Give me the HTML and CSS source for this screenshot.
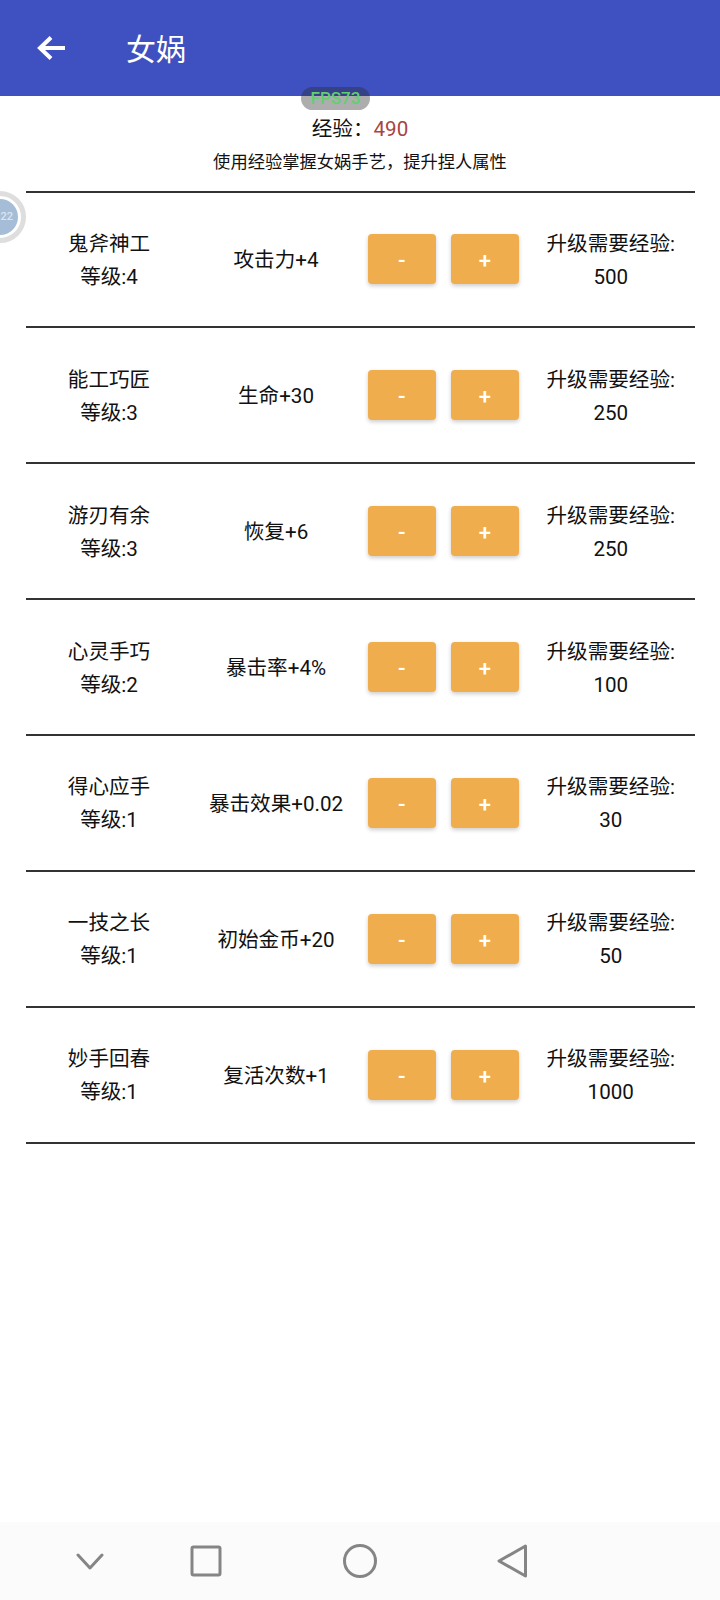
FILE: index.html
```html
<!DOCTYPE html>
<html lang="zh-CN">
<head>
    <meta charset="UTF-8">
    <meta name="viewport" content="width=device-width, initial-scale=1.0">
    <title>女娲</title>
    <link rel="stylesheet" href="styles.css">
</head>
<body>
    <div class="app">
        <header class="top-bar">
            <svg class="back-icon" width="32" height="28" viewBox="0 0 32 28">
                <path d="M29 14H4M15 3.5 4 14l11 10.5" fill="none" stroke="#fff" stroke-width="4"/>
            </svg>
            <h1 class="page-title">女娲</h1>
        </header>

        <div class="fps-badge">FPS73</div>
        <div class="float-ball"><span>22</span></div>

        <section class="summary">
            <p class="exp-total">经验：<span class="exp-value">490</span></p>
            <p class="exp-hint">使用经验掌握女娲手艺，提升捏人属性</p>
        </section>

        <div class="skill-list">
            <div class="skill-row">
                <div class="skill-cell">鬼斧神工<br>等级:4</div>
                <div class="skill-cell">攻击力+4</div>
                <div class="skill-btns"><button class="btn-step">-</button><button class="btn-step">+</button></div>
                <div class="skill-cell">升级需要经验:<br>500</div>
            </div>
            <div class="skill-row">
                <div class="skill-cell">能工巧匠<br>等级:3</div>
                <div class="skill-cell">生命+30</div>
                <div class="skill-btns"><button class="btn-step">-</button><button class="btn-step">+</button></div>
                <div class="skill-cell">升级需要经验:<br>250</div>
            </div>
            <div class="skill-row">
                <div class="skill-cell">游刃有余<br>等级:3</div>
                <div class="skill-cell">恢复+6</div>
                <div class="skill-btns"><button class="btn-step">-</button><button class="btn-step">+</button></div>
                <div class="skill-cell">升级需要经验:<br>250</div>
            </div>
            <div class="skill-row">
                <div class="skill-cell">心灵手巧<br>等级:2</div>
                <div class="skill-cell">暴击率+4%</div>
                <div class="skill-btns"><button class="btn-step">-</button><button class="btn-step">+</button></div>
                <div class="skill-cell">升级需要经验:<br>100</div>
            </div>
            <div class="skill-row">
                <div class="skill-cell">得心应手<br>等级:1</div>
                <div class="skill-cell">暴击效果+0.02</div>
                <div class="skill-btns"><button class="btn-step">-</button><button class="btn-step">+</button></div>
                <div class="skill-cell">升级需要经验:<br>30</div>
            </div>
            <div class="skill-row">
                <div class="skill-cell">一技之长<br>等级:1</div>
                <div class="skill-cell">初始金币+20</div>
                <div class="skill-btns"><button class="btn-step">-</button><button class="btn-step">+</button></div>
                <div class="skill-cell">升级需要经验:<br>50</div>
            </div>
            <div class="skill-row">
                <div class="skill-cell">妙手回春<br>等级:1</div>
                <div class="skill-cell">复活次数+1</div>
                <div class="skill-btns"><button class="btn-step">-</button><button class="btn-step">+</button></div>
                <div class="skill-cell">升级需要经验:<br>1000</div>
            </div>
        </div>

        <nav class="nav-bar">
            <svg class="nav-icon" width="30" height="18" viewBox="0 0 30 18">
                <path d="M3 3 15 16 27 3" fill="none" stroke="#858585" stroke-width="3" stroke-linecap="round" stroke-linejoin="round"/>
            </svg>
            <svg class="nav-icon" width="32" height="32" viewBox="0 0 32 32">
                <rect x="2" y="2" width="28" height="28" rx="1.5" fill="none" stroke="#858585" stroke-width="3"/>
            </svg>
            <svg class="nav-icon" width="34" height="34" viewBox="0 0 34 34">
                <circle cx="17" cy="17" r="15.5" fill="none" stroke="#858585" stroke-width="3"/>
            </svg>
            <svg class="nav-icon" width="31" height="34" viewBox="0 0 31 34">
                <path d="M28.5 2 2 17 28.5 32Z" fill="none" stroke="#858585" stroke-width="3" stroke-linejoin="round"/>
            </svg>
        </nav>
    </div>
</body>
</html>
```

FILE: styles.css
```css
* {
    box-sizing: border-box;
}
html, body {
    margin: 0;
    padding: 0;
}
body {
    background-color: #fff;
    color: #111;
    font-family: Roboto, "Noto Sans CJK SC", sans-serif;
}
.app {
    position: relative;
    width: 720px;
    height: 1600px;
    overflow: hidden;
    display: flex;
    flex-direction: column;
}
.top-bar {
    height: 95.5px;
    flex-shrink: 0;
    display: flex;
    align-items: center;
    padding-left: 36px;
    background-color: #3f51c1;
}
.back-icon {
    flex-shrink: 0;
}
.page-title {
    margin: 0 0 0 58px;
    padding-top: 4px;
    color: #fff;
    font-size: 30px;
    font-weight: 400;
    line-height: 1;
}
.fps-badge {
    position: absolute;
    left: 301px;
    top: 87px;
    width: 69px;
    height: 23px;
    border-radius: 12px;
    background-color: rgba(40, 40, 40, 0.38);
    color: #5fd070;
    font-size: 17px;
    font-weight: 500;
    line-height: 23px;
    text-align: center;
}
.float-ball {
    position: absolute;
    left: -26px;
    top: 191px;
    width: 52px;
    height: 52px;
    border-radius: 50%;
    border: 5px solid #dedede;
    background-color: #fff;
    padding: 3px;
}
.float-ball span {
    display: block;
    width: 100%;
    height: 100%;
    border-radius: 50%;
    background-color: #a5bdd6;
    color: #dbe5ef;
    font-size: 11px;
    font-weight: 500;
    line-height: 36px;
    text-align: right;
    padding-right: 5px;
}
.summary {
    height: 95px;
    flex-shrink: 0;
    text-align: center;
}
.summary p {
    margin: 0;
}
.exp-total {
    padding-top: 16.5px;
    font-size: 20.6px;
    line-height: 34px;
}
.exp-value {
    color: #a94442;
}
.exp-hint {
    font-size: 17.3px;
    line-height: 32px;
}
.skill-list {
    margin: 0 25.5px;
    border-top: 2px solid #333;
}
.skill-row {
    height: 135.86px;
    display: grid;
    grid-template-columns: 167px 167px 167.5px 167.5px;
    align-items: center;
    border-bottom: 2px solid #333;
}
.skill-cell {
    padding-top: 3px;
    font-size: 20.6px;
    line-height: 33px;
    text-align: center;
}
.skill-btns {
    display: flex;
    justify-content: center;
    gap: 15px;
}
.btn-step {
    width: 68px;
    height: 50px;
    padding: 3px 0 0;
    border: none;
    border-radius: 4px;
    background-color: #f0ad4e;
    box-shadow: 0 2px 4px rgba(0, 0, 0, 0.2);
    color: #fff;
    font-family: inherit;
    font-size: 22px;
    font-weight: 500;
}
.nav-bar {
    position: absolute;
    left: 0;
    right: 0;
    bottom: 0;
    height: 78px;
    background-color: #fbfbfb;
    display: flex;
    align-items: center;
    padding-left: 75px;
}
.nav-icon:nth-child(1) {
    margin-right: 85px;
}
.nav-icon:nth-child(2) {
    margin-right: 121px;
}
.nav-icon:nth-child(3) {
    margin-right: 120px;
}
```
